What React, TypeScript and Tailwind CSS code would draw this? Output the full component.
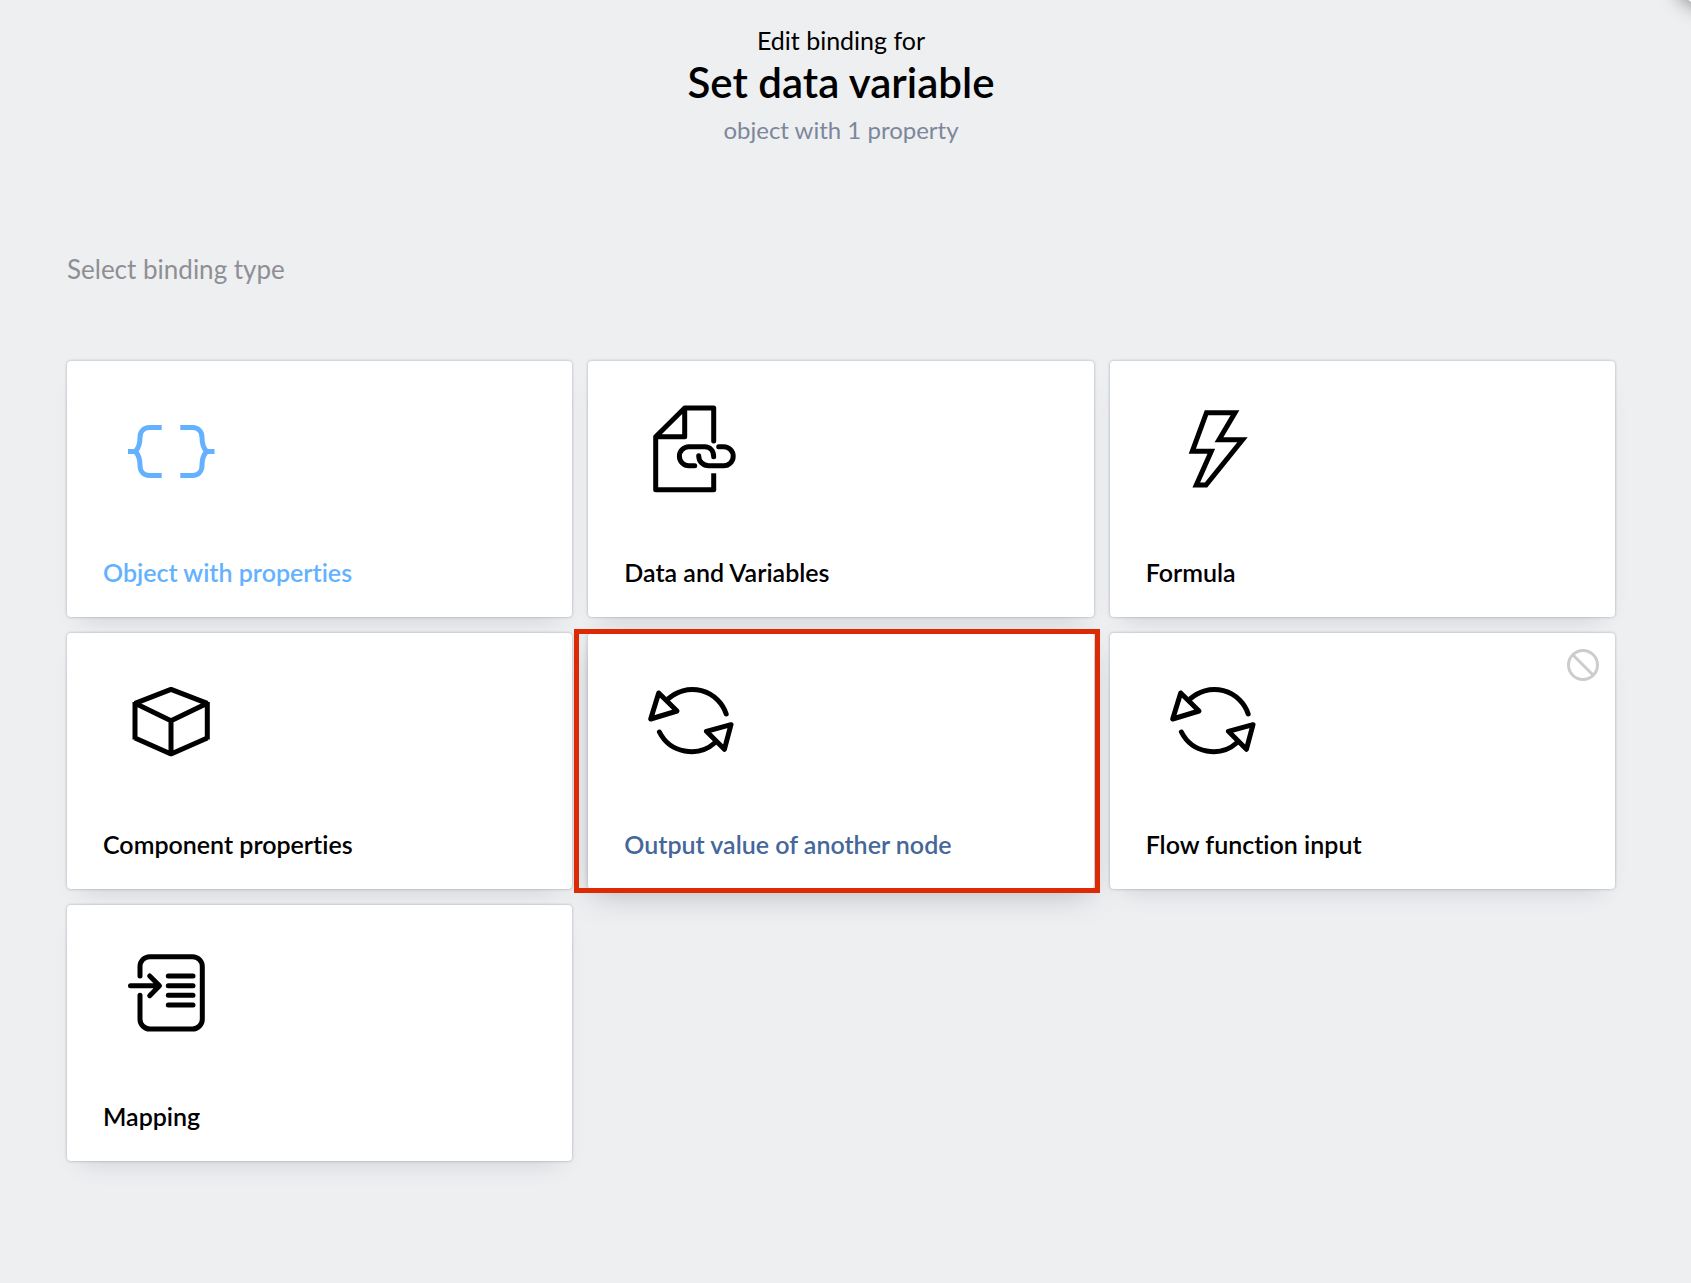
import type { ReactNode } from "react";

const stroke = {
  viewBox: "0 0 100 100",
  fill: "none",
  stroke: "currentColor",
  strokeWidth: 5,
  className: "size-[100px]",
  "aria-hidden": true,
};

const BracesIcon = () => (
  <svg {...stroke}>
    <path d="M40.700 26.500H28.500C22.500 26.500 19 31 19 36.500C19 42.500 18 46.500 14.500 50.500C18 54.500 19 58.500 19 64.500C19 70 22.500 74.500 28.500 74.500H40.700M7 50.500H15" />
    <path d="M59.300 26.500H71.500C77.500 26.500 81 31 81 36.500C81 42.500 82 46.500 85.500 50.500C82 54.500 81 58.500 81 64.500C81 70 77.500 74.500 71.500 74.500H59.300M93.500 50.500H85" />
  </svg>
);

const FileLinkIcon = () => (
  <svg {...stroke} viewBox="-0.7 0 100 100" strokeLinejoin="round">
    <path strokeLinecap="round" d="M71 40V7H42L13 35.700V88.700H71M42 7V35.700H13" />
    <path d="M71 88.700V72.300" />
    <path
      strokeLinecap="round"
      d="M52 64.700H46.200a9.500 9.500 0 0 1 0-19H62C67.500 45.700 71 50 71 55.700M56 54.700C56 60.500 60.500 64.700 66 64.700H81a9.500 9.500 0 0 0 0-19H76"
    />
  </svg>
);

const BoltIcon = () => (
  <svg {...stroke}>
    <path d="M42.500 11.700H71L55 38.700H78.500L42 84H32.300L47.300 50.300H28.300Z" />
  </svg>
);

const CubeIcon = () => (
  <svg {...stroke} strokeLinejoin="bevel">
    <path d="M14 30.300L50 16.300L86.300 30.300L50 47.700ZM14 29V66.500M86.300 29V66.500M50 47.700V81M14 65L50 81L86.300 65" />
  </svg>
);

const CycleIcon = () => (
  <svg {...stroke} viewBox="-0.7 0 100 100" strokeLinecap="round" strokeLinejoin="round">
    <path d="M25.700 25.700A35.700 35.700 0 0 1 83.500 41M16.700 59A35.700 35.700 0 0 0 72.500 69.500" />
    <path d="M16 20L34.300 38L8 46ZM88.300 51.700L63.700 58.300L81.700 76.300Z" />
  </svg>
);

const MappingIcon = () => (
  <svg {...stroke} strokeLinecap="round" strokeLinejoin="round">
    <path d="M19 31V21.500A9.800 9.800 0 0 1 28.800 11.700H71.500A9.800 9.800 0 0 1 81.300 21.500V74.200A9.800 9.800 0 0 1 71.500 84H28.800A9.800 9.800 0 0 1 19 74.200V50.300" />
    <path d="M9.500 40.700H38.300M28.700 31L38.500 40.700L28.700 50.700" />
    <path d="M47.300 31H72M47.300 40.700H72M47.300 50.300H72M47.300 60H72" />
  </svg>
);

const BlockedIcon = () => (
  <svg viewBox="0 0 32 32" fill="none" stroke="currentColor" strokeWidth="3" className="size-8" aria-hidden>
    <circle cx="16" cy="16" r="14.500" />
    <path d="M6 6L26 26" />
  </svg>
);

type Option = {
  label: string;
  icon: ReactNode;
  tone?: string;
  highlighted?: boolean;
  blocked?: boolean;
};

const options: Option[] = [
  { label: "Object with properties", icon: <BracesIcon />, tone: "text-[#64b2ff]" },
  { label: "Data and Variables", icon: <FileLinkIcon /> },
  { label: "Formula", icon: <BoltIcon /> },
  { label: "Component properties", icon: <CubeIcon /> },
  { label: "Output value of another node", icon: <CycleIcon />, highlighted: true },
  { label: "Flow function input", icon: <CycleIcon />, blocked: true },
  { label: "Mapping", icon: <MappingIcon /> },
];

function OptionCard({ label, icon, tone = "text-black", highlighted, blocked }: Option) {
  const shadow = highlighted
    ? "shadow-[0_0_4px_rgba(60,70,100,0.3),0_10px_28px_-6px_rgba(60,65,80,0.34)]"
    : "shadow-[0_0_3px_rgba(60,70,100,0.4),0_14px_24px_-14px_rgba(60,65,80,0.2)]";
  return (
    <button
      type="button"
      className={`relative flex h-64 flex-col items-start justify-between rounded bg-white pt-10 pb-[29px] text-left ${tone} ${shadow}`}
    >
      <span className="ml-[54px]">{icon}</span>
      <span className={`ml-9 text-[25px] leading-8 font-semibold ${highlighted ? "text-[#456799]" : ""}`}>
        {label}
      </span>
      {blocked && (
        <span className="absolute top-4 right-4 text-[#cccccc]">
          <BlockedIcon />
        </span>
      )}
      {highlighted && (
        <span className="pointer-events-none absolute -top-1 -right-1.5 -bottom-1 -left-3.5 border-[5px] border-[#dc2b04]" />
      )}
    </button>
  );
}

export default function App() {
  return (
    <main className="relative min-h-screen overflow-hidden bg-[#eeeff1] pr-[76px] pb-28 pl-[67px] font-['Lato',sans-serif] [font-variant-ligatures:none]">
      <button
        type="button"
        aria-label="Close"
        className="absolute -top-[58px] -right-12 size-16 rounded-full bg-white shadow-[0_2px_20px_rgba(0,0,0,0.45)]"
      />
      <header className="flex flex-col items-center pt-6 text-center">
        <p className="text-[25px] leading-8 text-black">Edit binding for</p>
        <h1 className="mt-0.5 text-[42px] leading-[48px] font-semibold text-black">Set data variable</h1>
        <p className="mt-2 text-2xl leading-8 text-[#7d879c]">object with 1 property</p>
      </header>
      <h2 className="mt-[107px] text-[26px] leading-8 text-[#8e8f94]">Select binding type</h2>
      <section className="mt-[76px] grid grid-cols-3 gap-4">
        {options.map((option) => (
          <OptionCard key={option.label} {...option} />
        ))}
      </section>
    </main>
  );
}
